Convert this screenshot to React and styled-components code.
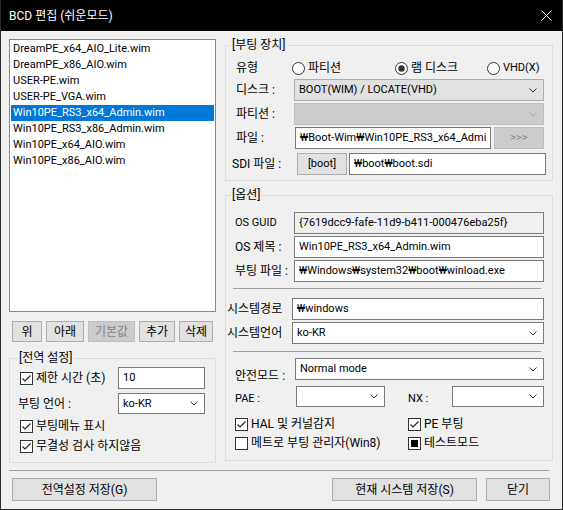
import React from "react";
import styled, { createGlobalStyle, css } from "styled-components";

const GlobalStyle = createGlobalStyle`
  html, body {
    margin: 0;
    padding: 0;
    background: #f0f0f0;
  }
  body {
    font-family: "Roboto", "Noto Sans CJK KR", sans-serif;
    font-size: 12px;
    color: #000;
  }
  * {
    box-sizing: border-box;
  }
`;

// latin-only strings are drawn a size smaller, Malgun's latin is small
const latin = css`
  font-size: ${(p) => (p.$latin ? "11px" : "12px")};
`;

const Window = styled.div`
  width: 563px;
  height: 510px;
  display: flex;
  flex-direction: column;
  background: #f0f0f0;
  border: 1px solid #2b2b2b;
  border-top: 0;
  overflow: hidden;
`;

const TitleBar = styled.div`
  height: 31px;
  flex: none;
  margin: 0 -1px;
  background: #000;
  color: #fff;
  display: flex;
  align-items: center;
  justify-content: space-between;
  padding-left: 9px;
  line-height: 16px;
`;

const CloseIcon = styled.svg`
  margin-right: 11px;
`;

const Main = styled.div`
  display: flex;
  padding: 8px 0 0 8px;
`;

const LeftCol = styled.div`
  width: 207px;
  flex: none;
  display: flex;
  flex-direction: column;
`;

const RightCol = styled.div`
  width: 328px;
  margin-left: 9px;
  flex: none;
  display: flex;
  flex-direction: column;
`;

const ListBox = styled.div`
  height: 273px;
  border: 1px solid #828790;
  background: #fff;
  padding: 1px;
`;

const ListItem = styled.div`
  height: 16px;
  line-height: 16px;
  padding-left: 2px;
  font-size: 11px;
  white-space: nowrap;
  background: ${(p) => (p.$selected ? "#0078d7" : "transparent")};
  color: ${(p) => (p.$selected ? "#fff" : "#000")};
`;

const ButtonRow = styled.div`
  display: flex;
  gap: 4px;
  margin-top: 9px;
  padding-left: 3px;
`;

const Button = styled.div`
  width: ${(p) => p.$w}px;
  height: ${(p) => p.$h || 21}px;
  flex: none;
  display: flex;
  align-items: center;
  justify-content: center;
  margin-left: ${(p) => p.$ml || 0}px;
  background: ${(p) => (p.$disabled ? "#cccccc" : "#e1e1e1")};
  border: 1px solid ${(p) => (p.$disabled ? "#bfbfbf" : "#adadad")};
  color: ${(p) => (p.$disabled ? "#838383" : "#000")};
  white-space: nowrap;
  line-height: 16px;
  ${latin}
`;

const Group = styled.div`
  position: relative;
  border: 1px solid #dcdcdc;
  height: ${(p) => p.$h}px;
  margin-top: ${(p) => p.$mt}px;
  padding: 0 0 0 ${(p) => p.$pl}px;
  display: flex;
  flex-direction: column;
`;

const Legend = styled.span`
  position: absolute;
  top: -9px;
  left: ${(p) => p.$x}px;
  padding: 0 1px;
  background: #f0f0f0;
  line-height: 16px;
`;

const Row = styled.div`
  display: flex;
  align-items: center;
  height: ${(p) => p.$h}px;
  margin-top: ${(p) => p.$mt}px;
  margin-left: ${(p) => p.$ml || 0}px;
`;

const Label = styled.div`
  width: ${(p) => p.$w}px;
  flex: none;
  white-space: nowrap;
  line-height: 16px;
  align-self: ${(p) => (p.$dy ? "flex-start" : "center")};
  margin-top: ${(p) => p.$dy || 0}px;
  margin-left: ${(p) => p.$ml || 0}px;
  ${latin}
`;

const Field = styled.div`
  width: ${(p) => p.$w}px;
  height: 100%;
  flex: none;
  display: flex;
  align-items: center;
  padding-left: ${(p) => p.$pad ?? 4}px;
  margin-left: ${(p) => p.$ml || 0}px;
  background: ${(p) => p.$bg || "#fff"};
  border: 1px solid ${(p) => p.$border || "#7a7a7a"};
  white-space: nowrap;
  overflow: hidden;
  line-height: 16px;
  font-size: 11px;
`;

const SelectText = styled.span`
  flex: 1;
  overflow: hidden;
`;

const Chevron = ({ color = "#333" }) => (
  <svg width="8" height="5" viewBox="0 0 8 5" style={{ marginRight: 6, flex: "none" }}>
    <path d="M0.5 0.5 L4 4 L7.5 0.5" fill="none" stroke={color} strokeWidth="1" />
  </svg>
);

const Select = ({ w, value, bg, border, disabled, ml }) => (
  <Field $w={w} $bg={bg} $border={border} $ml={ml}>
    <SelectText>{value}</SelectText>
    <Chevron color={disabled ? "#a6a6a6" : "#333"} />
  </Field>
);

const CheckLabel = styled.div`
  display: flex;
  align-items: center;
  gap: 3px;
  white-space: nowrap;
  line-height: 16px;
  width: ${(p) => (p.$w ? p.$w + "px" : "auto")};
  flex: none;
  ${latin}
`;

const Box = styled.span`
  width: 13px;
  height: 13px;
  flex: none;
  border: 1px solid #333;
  background: #fff;
  display: flex;
  align-items: center;
  justify-content: center;
`;

const Fill = styled.span`
  width: 7px;
  height: 7px;
  background: #000;
`;

const Check = ({ checked, mixed, children, w }) => (
  <CheckLabel $w={w}>
    <Box>
      {checked && (
        <svg width="11" height="11" viewBox="0 0 11 11">
          <path d="M1.5 5.5 L4 8 L9.5 2.5" fill="none" stroke="#222" strokeWidth="1.1" />
        </svg>
      )}
      {mixed && <Fill />}
    </Box>
    <span>{children}</span>
  </CheckLabel>
);

const Radio = ({ on, children, w, latin }) => (
  <CheckLabel $w={w} $latin={latin}>
    <svg width="13" height="13" viewBox="0 0 13 13">
      <circle cx="6.5" cy="6.5" r="6" fill="#fff" stroke="#333" strokeWidth="1" />
      {on && <circle cx="6.5" cy="6.5" r="3.2" fill="#333" />}
    </svg>
    <span>{children}</span>
  </CheckLabel>
);

const InnerSep = styled.div`
  height: 1px;
  width: 308px;
  margin: ${(p) => p.$mt}px 0 0 -2px;
  background: #a0a0a0;
`;

const Separator = styled.div`
  height: 1px;
  width: 540px;
  margin: 7px 0 0 8px;
  background: #a0a0a0;
`;

const Footer = styled.div`
  display: flex;
  margin-top: 7px;
  padding: 0 12px 0 11px;
`;

const Spacer = styled.div`
  flex: 1;
`;

const items = [
  "DreamPE_x64_AIO_Lite.wim",
  "DreamPE_x86_AIO.wim",
  "USER-PE.wim",
  "USER-PE_VGA.wim",
  "Win10PE_RS3_x64_Admin.wim",
  "Win10PE_RS3_x86_Admin.wim",
  "Win10PE_x64_AIO.wim",
  "Win10PE_x86_AIO.wim",
];

export default function App() {
  return (
    <>
      <GlobalStyle />
      <Window>
        <TitleBar>
          <span>BCD 편집 (쉬운모드)</span>
          <CloseIcon width="11" height="11" viewBox="0 0 11 11">
            <path d="M0.5 0.5 L10.5 10.5 M10.5 0.5 L0.5 10.5" stroke="#fff" strokeWidth="1" />
          </CloseIcon>
        </TitleBar>

        <Main>
          <LeftCol>
            <ListBox>
              {items.map((it, i) => (
                <ListItem key={it} $selected={i === 4}>
                  {it}
                </ListItem>
              ))}
            </ListBox>
            <ButtonRow>
              <Button $w={30}>위</Button>
              <Button $w={38}>아래</Button>
              <Button $w={47} $disabled>기본값</Button>
              <Button $w={36}>추가</Button>
              <Button $w={34}>삭제</Button>
            </ButtonRow>
            <Group $mt={16} $h={105} $pl={10}>
              <Legend $x={8}>[전역 설정]</Legend>
              <Row $mt={8} $h={22}>
                <Label $w={98}>
                  <Check checked>제한 시간 (초)</Check>
                </Label>
                <Field $w={87}>10</Field>
              </Row>
              <Row $mt={4} $h={21} $ml={-2}>
                <Label $w={100}>부팅 언어 :</Label>
                <Select w={87} value="ko-KR" />
              </Row>
              <Row $mt={3} $h={18}>
                <Check checked>부팅메뉴 표시</Check>
              </Row>
              <Row $mt={2} $h={18}>
                <Check checked>무결성 검사 하지않음</Check>
              </Row>
            </Group>
          </LeftCol>

          <RightCol>
            <Group $mt={6} $h={136} $pl={10}>
              <Legend $x={5}>[부팅 장치]</Legend>
              <Row $mt={14} $h={16}>
                <Label $w={56}>유형</Label>
                <Radio w={103}>파티션</Radio>
                <Radio w={92} on>램 디스크</Radio>
                <Radio latin>VHD(X)</Radio>
              </Row>
              <Row $mt={3} $h={22}>
                <Label $w={58}>디스크 :</Label>
                <Select w={250} value="BOOT(WIM) / LOCATE(VHD)" bg="#e1e1e1" border="#adadad" />
              </Row>
              <Row $mt={2} $h={22}>
                <Label $w={58}>파티션 :</Label>
                <Select w={250} value="" bg="#cccccc" border="#bfbfbf" disabled />
              </Row>
              <Row $mt={2} $h={22}>
                <Label $w={59}>파일 :</Label>
                <Field $w={196}>₩Boot-Wim₩Win10PE_RS3_x64_Admi</Field>
                <Button $w={50} $h={22} $disabled $latin $ml={3}>
                  &gt;&gt;&gt;
                </Button>
              </Row>
              <Row $mt={4} $h={22} $ml={-4}>
                <Label $w={65}>SDI 파일 :</Label>
                <Button $w={50} $h={22} $latin>[boot]</Button>
                <Field $w={197} $ml={2}>₩boot₩boot.sdi</Field>
              </Row>
            </Group>

            <Group $mt={14} $h={266} $pl={9}>
              <Legend $x={5}>[옵션]</Legend>
              <Row $mt={16} $h={22}>
                <Label $w={59} $latin>OS GUID</Label>
                <Field $w={250} $bg="#f0f0f0">{"{7619dcc9-fafe-11d9-b411-000476eba25f}"}</Field>
              </Row>
              <Row $mt={2} $h={22}>
                <Label $w={59}>OS 제목 :</Label>
                <Field $w={250}>Win10PE_RS3_x64_Admin.wim</Field>
              </Row>
              <Row $mt={2} $h={22}>
                <Label $w={59}>부팅 파일 :</Label>
                <Field $w={250}>₩Windows₩system32₩boot₩winload.exe</Field>
              </Row>
              <InnerSep $mt={6} />
              <Row $mt={9} $h={22} $ml={-8}>
                <Label $w={65}>시스템경로</Label>
                <Field $w={252}>₩windows</Field>
              </Row>
              <Row $mt={2} $h={22} $ml={-8}>
                <Label $w={65}>시스템언어</Label>
                <Select w={252} value="ko-KR" />
              </Row>
              <InnerSep $mt={7} />
              <Row $mt={6} $h={22}>
                <Label $w={60} $dy={10}>안전모드 :</Label>
                <Select w={249} value="Normal mode" />
              </Row>
              <Row $mt={6} $h={21}>
                <Label $w={61} $dy={5} $latin>PAE :</Label>
                <Select w={89} value="" />
                <Label $w={44} $dy={5} $ml={23} $latin>NX :</Label>
                <Select w={92} value="" />
              </Row>
              <Row $mt={9} $h={16}>
                <Check checked w={173}>HAL 및 커널감지</Check>
                <Check checked>PE 부팅</Check>
              </Row>
              <Row $mt={3} $h={16}>
                <Check w={173}>메트로 부팅 관리자(Win8)</Check>
                <Check mixed>테스트모드</Check>
              </Row>
            </Group>
          </RightCol>
        </Main>

        <Separator />

        <Footer>
          <Button $w={145} $h={23}>전역설정 저장(G)</Button>
          <Spacer />
          <Button $w={145} $h={23}>현재 시스템 저장(S)</Button>
          <Button $w={64} $h={23} $ml={9}>닫기</Button>
        </Footer>
      </Window>
    </>
  );
}
